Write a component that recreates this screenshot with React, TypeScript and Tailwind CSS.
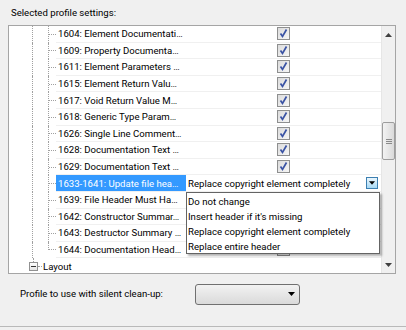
import React from "react";

// rows of the tree under the collapsed group
const rows: { label: string; selected?: boolean }[] = [
  { label: "1604: Element Documentati…" },
  { label: "1609: Property Documenta…" },
  { label: "1611: Element Parameters …" },
  { label: "1615: Element Return Valu…" },
  { label: "1617: Void Return Value M…" },
  { label: "1618: Generic Type Param…" },
  { label: "1626: Single Line Comment…" },
  { label: "1628: Documentation Text …" },
  { label: "1629: Documentation Text …" },
  { label: "1633-1641: Update file hea…", selected: true },
  { label: "1639: File Header Must Ha…" },
  { label: "1642: Constructor Summar…" },
  { label: "1643: Destructor Summary …" },
  { label: "1644: Documentation Head…" },
];

const options = [
  "Do not change",
  "Insert header if it's missing",
  "Replace copyright element completely",
  "Replace entire header",
];

function CheckBox() {
  return (
    <div className="w-[13px] h-[13px] border border-[#8e8f8f] bg-gradient-to-br from-[#dcdcdc] to-[#f6f6f6] flex items-center justify-center">
      <svg width="11" height="11" viewBox="0 0 11 11">
        <path d="M2.5 5.5 L4.5 8.5 L8.5 1.5" fill="none" stroke="#3a53a4" strokeWidth="1.7" />
      </svg>
    </div>
  );
}

function Arrow({ size = 7 }: { size?: number }) {
  return (
    <svg width={size} height={4} viewBox="0 0 7 4">
      <path d="M0 0 L7 0 L3.5 4 Z" fill="#000" />
    </svg>
  );
}

function TreeRow({ label, selected, last }: { label: string; selected?: boolean; last?: boolean }) {
  return (
    <div className="flex h-[16.6px] shrink-0">
      <div className="w-[23px] shrink-0" />
      <div className="w-[16px] shrink-0 border-l border-dotted border-[#a0a0a0]" />
      <div className={`w-[8px] shrink-0 flex ${last ? "self-start h-1/2 items-end" : "items-center"} border-l border-dotted border-[#a0a0a0]`}>
        <div className="w-full h-0 border-t border-dotted border-[#a0a0a0]" />
      </div>
      <div className="flex-1 flex border-b border-[#f0f0f0]">
        <div
          className={`w-[130px] shrink-0 pl-[2px] pt-[1px] flex items-center whitespace-nowrap overflow-hidden ${
            selected ? "bg-[#3399ff] text-white" : "text-black"
          }`}
        >
          {label}
        </div>
        {selected ? (
          <div className="w-[193px] flex items-center bg-white pl-[2px] pr-[1px]">
            <span className="flex-1 pt-[1px] whitespace-nowrap overflow-hidden">Replace copyright element completely</span>
            <div className="w-[12px] h-[12px] border border-[#3c7fb1] bg-gradient-to-b from-[#eaf6fd] to-[#a7d9f5] flex items-center justify-center">
              <Arrow size={6} />
            </div>
          </div>
        ) : (
          <div className="flex-1 flex items-center pl-[91px]">
            <CheckBox />
          </div>
        )}
      </div>
    </div>
  );
}

export default function App() {
  return (
    <div
      className="w-[406px] h-[330px] bg-[#f0f0f0] flex flex-col text-[9.6px] text-black overflow-hidden"
      style={{ fontFamily: 'Roboto, "Liberation Sans", sans-serif' }}
    >
      {/* header label */}
      <div className="pl-[11px] pt-[5px] h-[25px] leading-[16px]">Selected profile settings:</div>

      {/* tree panel */}
      <div className="ml-[8px] w-[388px] h-[249px] border border-[#a5a5a5] bg-white flex relative overflow-hidden">
        <div className="flex-1 flex flex-col leading-[16px]">
          {rows.map((r, i) => (
            <TreeRow key={r.label} label={r.label} selected={r.selected} last={i === rows.length - 1} />
          ))}
          {/* Layout group */}
          <div className="flex h-[16.6px] shrink-0">
            <div className="w-[20px] shrink-0" />
            <div className="w-[9px] shrink-0 flex flex-col items-center">
              <div className="h-[4px] w-0 border-l border-dotted border-[#a0a0a0]" />
              <div className="w-[9px] h-[9px] border border-[#919191] bg-gradient-to-b from-white to-[#e5e5e5] flex items-center justify-center">
                <div className="w-[5px] h-px bg-[#333]" />
              </div>
            </div>
            <div className="w-[4px] shrink-0 flex items-start pt-[8px]">
              <div className="w-full h-0 border-t border-dotted border-[#a0a0a0]" />
            </div>
            <div className="pl-[1px] pt-[1px] flex items-center leading-[16px]">Layout</div>
          </div>
        </div>

        {/* scrollbar */}
        <div className="w-[14px] shrink-0 bg-[#f0f0f0] border-l border-[#e6e6e6] flex flex-col items-center">
          <div className="h-[17px] flex items-center justify-center">
            <svg width="7" height="4" viewBox="0 0 7 4">
              <path d="M0 4 L7 4 L3.5 0 Z" fill="#404040" />
            </svg>
          </div>
          <div className="h-[79px]" />
          <div className="w-[13px] h-[38px] rounded-[2px] border border-[#9d9d9d] bg-gradient-to-r from-[#f3f3f3] to-[#dadada] flex flex-col items-center justify-center gap-[1px]">
            <div className="w-[6px] h-px bg-[#8a8a8a]" />
            <div className="w-[6px] h-px bg-[#8a8a8a]" />
            <div className="w-[6px] h-px bg-[#8a8a8a]" />
          </div>
          <div className="flex-1" />
          <div className="h-[17px] flex items-center justify-center">
            <svg width="7" height="4" viewBox="0 0 7 4">
              <path d="M0 0 L7 0 L3.5 4 Z" fill="#404040" />
            </svg>
          </div>
        </div>

        {/* open dropdown list */}
        <div className="absolute left-[177px] top-[166px] w-[194px] bg-white border border-[#646464] shadow-[2px_2px_2px_rgba(0,0,0,0.3)] flex flex-col">
          {options.map((o) => (
            <div key={o} className="h-[15px] leading-[15px] pl-[1px] pt-[1px] whitespace-nowrap">
              {o}
            </div>
          ))}
        </div>
      </div>

      {/* silent clean-up profile */}
      <div className="flex items-center h-[40px]">
        <div className="pl-[20px] w-[195px] shrink-0 whitespace-nowrap">Profile to use with silent clean-up:</div>
        <div className="w-[105px] h-[21px] rounded-[3px] border border-[#707070] bg-gradient-to-b from-[#f2f2f2] to-[#dadada] flex items-center justify-end pr-[4px]">
          <Arrow />
        </div>
      </div>
      <div className="flex-1" />
      <div className="h-[4px] border-t border-[#b9b9b9]" />
    </div>
  );
}
